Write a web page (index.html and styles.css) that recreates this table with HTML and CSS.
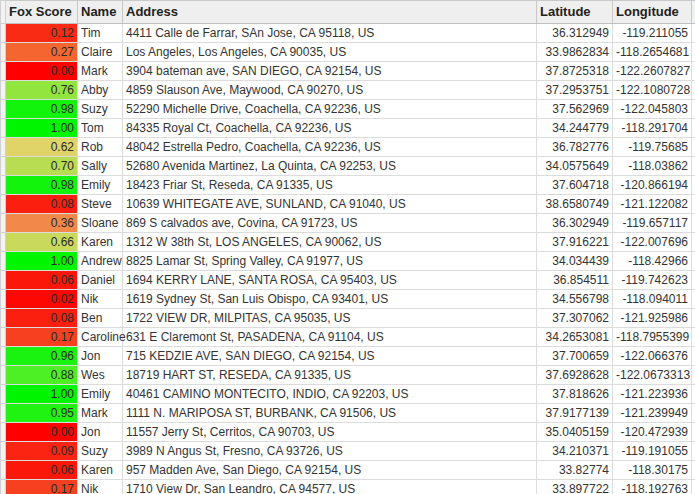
FILE: index.html
```html
<!DOCTYPE html>
<html>
<head>
<meta charset="utf-8">
<link rel="stylesheet" href="styles.css">
</head>
<body>
<table class="sheet">
<colgroup>
<col class="c-rh"><col class="c-score"><col class="c-name"><col class="c-addr"><col class="c-lat"><col class="c-lng"><col class="c-extra">
</colgroup>
<thead>
<tr class="hdr"><th class="rh"></th><th>Fox Score</th><th>Name</th><th>Address</th><th>Latitude</th><th>Longitude</th><th class="extra"></th></tr>
</thead>
<tbody>
<tr><td class="rh"></td><td class="score" style="background:#f92b15">0.12</td><td>Tim</td><td>4411 Calle de Farrar, SAn Jose, CA 95118, US</td><td class="num">36.312949</td><td class="num">-119.211055</td><td></td></tr>
<tr><td class="rh"></td><td class="score" style="background:#f5652f">0.27</td><td>Claire</td><td>Los Angeles, Los Angeles, CA 90035, US</td><td class="num">33.9862834</td><td class="num">-118.2654681</td><td></td></tr>
<tr><td class="rh"></td><td class="score" style="background:#ff0000">0.00</td><td>Mark</td><td>3904 bateman ave, SAN DIEGO, CA 92154, US</td><td class="num">37.8725318</td><td class="num">-122.2607827</td><td></td></tr>
<tr><td class="rh"></td><td class="score" style="background:#92e43e">0.76</td><td>Abby</td><td>4859 Slauson Ave, Maywood, CA 90270, US</td><td class="num">37.2953751</td><td class="num">-122.1080728</td><td></td></tr>
<tr><td class="rh"></td><td class="score" style="background:#12f40c">0.98</td><td>Suzy</td><td>52290 Michelle Drive, Coachella, CA 92236, US</td><td class="num">37.562969</td><td class="num">-122.045803</td><td></td></tr>
<tr><td class="rh"></td><td class="score" style="background:#00f500">1.00</td><td>Tom</td><td>84335 Royal Ct, Coachella, CA 92236, US</td><td class="num">34.244779</td><td class="num">-118.291704</td><td></td></tr>
<tr><td class="rh"></td><td class="score" style="background:#e0d368">0.62</td><td>Rob</td><td>48042 Estrella Pedro, Coachella, CA 92236, US</td><td class="num">36.782776</td><td class="num">-119.75685</td><td></td></tr>
<tr><td class="rh"></td><td class="score" style="background:#b8dc52">0.70</td><td>Sally</td><td>52680 Avenida Martinez, La Quinta, CA 92253, US</td><td class="num">34.0575649</td><td class="num">-118.03862</td><td></td></tr>
<tr><td class="rh"></td><td class="score" style="background:#12f40c">0.98</td><td>Emily</td><td>18423 Friar St, Reseda, CA 91335, US</td><td class="num">37.604718</td><td class="num">-120.866194</td><td></td></tr>
<tr><td class="rh"></td><td class="score" style="background:#fb1f10">0.08</td><td>Steve</td><td>10639 WHITEGATE AVE, SUNLAND, CA 91040, US</td><td class="num">38.6580749</td><td class="num">-121.122082</td><td></td></tr>
<tr><td class="rh"></td><td class="score" style="background:#f2884a">0.36</td><td>Sloane</td><td>869 S calvados ave, Covina, CA 91723, US</td><td class="num">36.302949</td><td class="num">-119.657117</td><td></td></tr>
<tr><td class="rh"></td><td class="score" style="background:#c8d95c">0.66</td><td>Karen</td><td>1312 W 38th St, LOS ANGELES, CA 90062, US</td><td class="num">37.916221</td><td class="num">-122.007696</td><td></td></tr>
<tr><td class="rh"></td><td class="score" style="background:#00f500">1.00</td><td>Andrew</td><td>8825 Lamar St, Spring Valley, CA 91977, US</td><td class="num">34.034439</td><td class="num">-118.42966</td><td></td></tr>
<tr><td class="rh"></td><td class="score" style="background:#fc170b">0.06</td><td>Daniel</td><td>1694 KERRY LANE, SANTA ROSA, CA 95403, US</td><td class="num">36.854511</td><td class="num">-119.742623</td><td></td></tr>
<tr><td class="rh"></td><td class="score" style="background:#fe0804">0.02</td><td>Nik</td><td>1619 Sydney St, San Luis Obispo, CA 93401, US</td><td class="num">34.556798</td><td class="num">-118.094011</td><td></td></tr>
<tr><td class="rh"></td><td class="score" style="background:#fb1f10">0.08</td><td>Ben</td><td>1722 VIEW DR, MILPITAS, CA 95035, US</td><td class="num">37.307062</td><td class="num">-121.925986</td><td></td></tr>
<tr><td class="rh"></td><td class="score" style="background:#f7401f">0.17</td><td>Caroline</td><td>631 E Claremont St, PASADENA, CA 91104, US</td><td class="num">34.2653081</td><td class="num">-118.7955399</td><td></td></tr>
<tr><td class="rh"></td><td class="score" style="background:#1af30f">0.96</td><td>Jon</td><td>715 KEDZIE AVE, SAN DIEGO, CA 92154, US</td><td class="num">37.700659</td><td class="num">-122.066376</td><td></td></tr>
<tr><td class="rh"></td><td class="score" style="background:#4cf025">0.88</td><td>Wes</td><td>18719 HART ST, RESEDA, CA 91335, US</td><td class="num">37.6928628</td><td class="num">-122.0673313</td><td></td></tr>
<tr><td class="rh"></td><td class="score" style="background:#00f500">1.00</td><td>Emily</td><td>40461 CAMINO MONTECITO, INDIO, CA 92203, US</td><td class="num">37.818626</td><td class="num">-121.223936</td><td></td></tr>
<tr><td class="rh"></td><td class="score" style="background:#20f212">0.95</td><td>Mark</td><td>1111 N. MARIPOSA ST, BURBANK, CA 91506, US</td><td class="num">37.9177139</td><td class="num">-121.239949</td><td></td></tr>
<tr><td class="rh"></td><td class="score" style="background:#ff0000">0.00</td><td>Jon</td><td>11557 Jerry St, Cerritos, CA 90703, US</td><td class="num">35.0405159</td><td class="num">-120.472939</td><td></td></tr>
<tr><td class="rh"></td><td class="score" style="background:#fb2312">0.09</td><td>Suzy</td><td>3989 N Angus St, Fresno, CA 93726, US</td><td class="num">34.210371</td><td class="num">-119.191055</td><td></td></tr>
<tr><td class="rh"></td><td class="score" style="background:#fc170b">0.06</td><td>Karen</td><td>957 Madden Ave, San Diego, CA 92154, US</td><td class="num">33.82774</td><td class="num">-118.30175</td><td></td></tr>
<tr><td class="rh"></td><td class="score" style="background:#f7401f">0.17</td><td>Nik</td><td>1710 View Dr, San Leandro, CA 94577, US</td><td class="num">33.897722</td><td class="num">-118.192763</td><td></td></tr>
</tbody>
</table>
</body>
</html>
```
FILE: styles.css
```css
html, body {
  margin: 0;
  padding: 0;
  background: #ffffff;
  overflow: hidden;
}
.sheet {
  border-collapse: collapse;
  table-layout: fixed;
  width: 720px;
  font-family: "Liberation Sans", Arial, sans-serif;
  font-size: 12px;
  color: #333333;
}
.c-rh { width: 5px; }
.c-score { width: 72px; }
.c-name { width: 45px; }
.c-addr { width: 414px; }
.c-lat { width: 76px; }
.c-lng { width: 79px; }
.c-extra { width: 29px; }

.sheet th, .sheet td {
  border: 1px solid #dcdcdc;
  padding: 0 3px;
  white-space: nowrap;
  overflow: visible;
  text-align: left;
  vertical-align: middle;
}
.sheet td {
  height: 18px;
  line-height: 18px;
}
.hdr th {
  height: 22px;
  line-height: 22px;
  background: #efefef;
  font-size: 13px;
  font-weight: bold;
  color: #222222;
  border-color: #c9c9c9;
  border-bottom: 1px solid #c0c0c0;
  padding-left: 3px;
}
.hdr th.extra {
  background: #eef3ec;
  border-left: 1px solid #b9c9b3;
}
.sheet .rh {
  padding: 0;
  background: #f3f3f3;
  border-color: #d0d0d0;
}
.sheet td.score {
  text-align: right;
  color: #2a2a2a;
  padding-right: 3px;
}
.sheet td.num {
  text-align: right;
  padding-right: 3px;
}
```
